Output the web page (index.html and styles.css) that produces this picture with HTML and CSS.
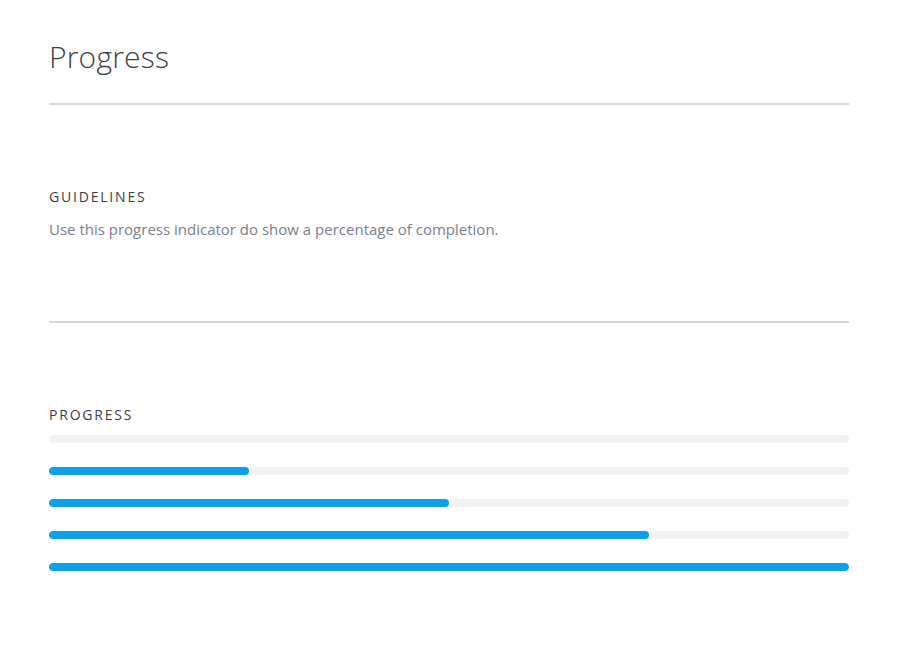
FILE: index.html
```html
<!DOCTYPE html>
<html>
<head>
<meta charset="utf-8">
<link rel="stylesheet" href="styles.css">
</head>
<body>
<main class="page">
  <header class="page-header">
    <h1 class="title">Progress</h1>
  </header>
  <section class="section guidelines">
    <h2 class="label">GUIDELINES</h2>
    <p class="desc">Use this progress indicator do show a percentage of completion.</p>
  </section>
  <section class="section progress-section">
    <h2 class="label">PROGRESS</h2>
    <div class="bars">
      <div class="track"><div class="fill" style="width:0%"></div></div>
      <div class="track"><div class="fill" style="width:25%"></div></div>
      <div class="track"><div class="fill" style="width:50%"></div></div>
      <div class="track"><div class="fill" style="width:75%"></div></div>
      <div class="track"><div class="fill" style="width:100%"></div></div>
    </div>
  </section>
</main>
</body>
</html>
```
FILE: styles.css
```css
* { box-sizing: border-box; }
html, body { margin: 0; padding: 0; background: #ffffff; }
body {
  font-family: "Open Sans", "Lato", sans-serif;
  color: #3d414a;
}
.page {
  width: 800px;
  margin-left: 49px;
  padding-top: 38px;
}
.page-header {
  border-bottom: 2px solid #d9d9dc;
  padding-bottom: 27px;
}
.title {
  margin: 0;
  font-size: 30px;
  font-weight: 300;
  line-height: 38px;
  color: #3d414a;
  letter-spacing: 0.2px;
}
.section {
  padding-top: 82px;
}
.guidelines {
  border-bottom: 2px solid #d9d9dc;
  padding-bottom: 82px;
}
.label {
  margin: 0;
  font-size: 14px;
  font-weight: 400;
  line-height: 20px;
  letter-spacing: 1.8px;
  color: #3d414a;
}
.desc {
  margin: 12px 0 0;
  font-size: 15px;
  line-height: 20px;
  color: #7b808a;
}
.bars {
  display: flex;
  flex-direction: column;
  gap: 24px;
  margin-top: 10px;
}
.track {
  height: 8px;
  border-radius: 4px;
  background: #f2f2f4;
  overflow: hidden;
}
.fill {
  height: 100%;
  border-radius: 4px;
  background: #0fa0ea;
}
```
